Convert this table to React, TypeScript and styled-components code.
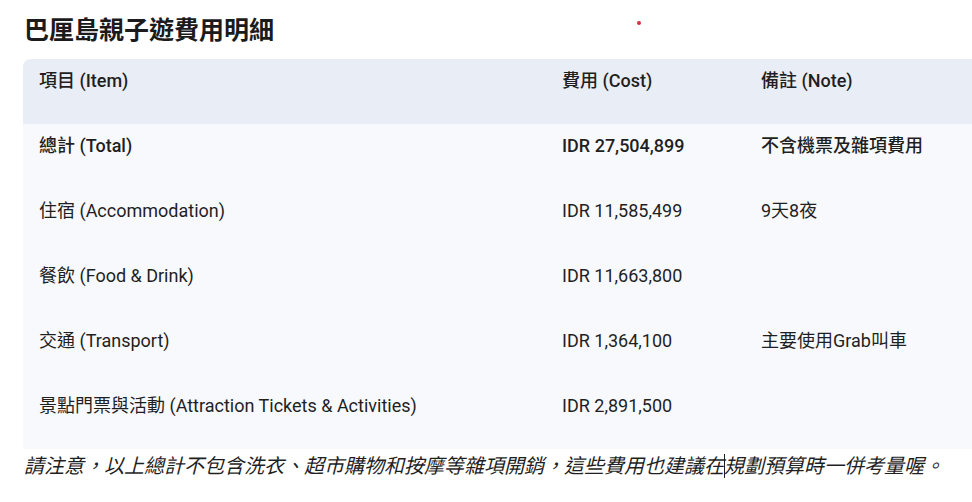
import styled, { createGlobalStyle } from 'styled-components';

const GlobalStyle = createGlobalStyle`
  body {
    margin: 0;
    background: #fff;
    overflow: hidden;
    font-family: Roboto, "Noto Sans CJK TC", sans-serif;
    color: #1f1f1f;
  }
`;

type Row = { item: string; cost: string; note: string; strong?: boolean };

const rows: Row[] = [
  { item: '總計 (Total)', cost: 'IDR 27,504,899', note: '不含機票及雜項費用', strong: true },
  { item: '住宿 (Accommodation)', cost: 'IDR 11,585,499', note: '9天8夜' },
  { item: '餐飲 (Food & Drink)', cost: 'IDR 11,663,800', note: '' },
  { item: '交通 (Transport)', cost: 'IDR 1,364,100', note: '主要使用Grab叫車' },
  { item: '景點門票與活動 (Attraction Tickets & Activities)', cost: 'IDR 2,891,500', note: '' },
];

export default function App() {
  return (
    <Page>
      <GlobalStyle />
      <Dot />
      <Title>巴厘島親子遊費用明細</Title>
      <Table>
        <colgroup>
          <col style={{ width: 523 }} />
          <col style={{ width: 199 }} />
          <col />
        </colgroup>
        <thead>
          <tr>
            <HeadCell>項目 (Item)</HeadCell>
            <HeadCell>費用 (Cost)</HeadCell>
            <HeadCell>備註 (Note)</HeadCell>
          </tr>
        </thead>
        <tbody>
          {rows.map((r) => (
            <tr key={r.item}>
              <Cell $strong={r.strong}>{r.item}</Cell>
              <Cell $strong={r.strong}>{r.cost}</Cell>
              <Cell $strong={r.strong}>{r.note}</Cell>
            </tr>
          ))}
        </tbody>
      </Table>
      <Note>
        請注意，以上總計不包含洗衣、超市購物和按摩等雜項開銷，這些費用也建議在<Caret />規劃預算時一併考量喔。
      </Note>
    </Page>
  );
}

const Page = styled.div`
  position: relative;
  padding: 16px 0 0 23px;
  width: 1000px;
`;

const Dot = styled.span`
  position: absolute;
  left: 637px;
  top: 21px;
  width: 4px;
  height: 4px;
  border-radius: 50%;
  background: #d0303a;
`;

const Title = styled.h1`
  margin: 0 0 13px 1px;
  font-size: 25px;
  line-height: 30px;
  font-weight: 700;
  color: #1b1b1b;
`;

const Table = styled.table`
  width: 977px;
  border-collapse: separate;
  border-spacing: 0;
  table-layout: fixed;
  background: #f8f9fc;
  border-radius: 8px 0 0 0;
  overflow: hidden;
`;

const HeadCell = styled.th`
  background: #e9edf5;
  text-align: left;
  vertical-align: top;
  font-size: 18px;
  font-weight: 500;
  line-height: 22px;
  padding: 11px 16px 32px;
  height: 22px;
`;

const Cell = styled.td<{ $strong?: boolean }>`
  vertical-align: top;
  font-size: 18px;
  font-weight: ${(p) => (p.$strong ? 500 : 400)};
  line-height: 22px;
  padding: 11px 16px 32px;
  height: 22px;
  white-space: nowrap;
`;

const Note = styled.p`
  margin: 3px 0 0 1px;
  font-size: 20px;
  line-height: 28px;
  font-style: italic;
  color: #1f1f1f;
  white-space: nowrap;
`;

const Caret = styled.span`
  display: inline-block;
  width: 1px;
  height: 24px;
  margin: 0 -1px -5px 0;
  background: #1f1f1f;
  font-style: normal;
`;
